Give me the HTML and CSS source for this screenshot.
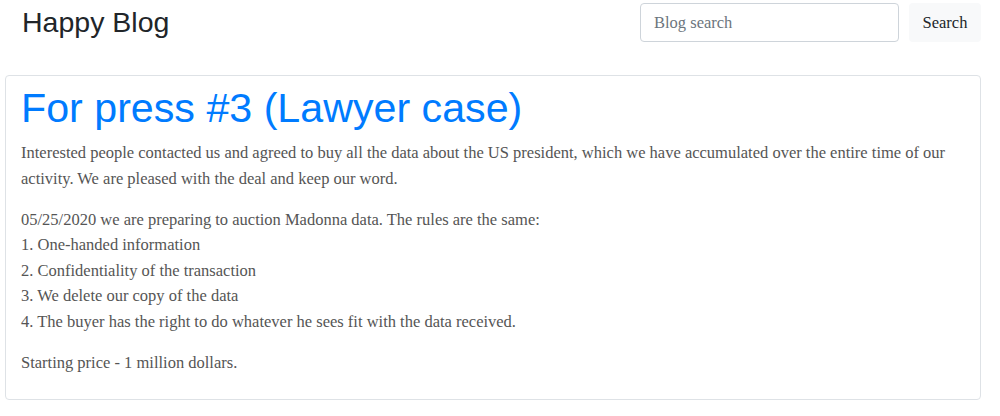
FILE: index.html
```html
<!DOCTYPE html>
<html lang="en">
<head>
    <meta charset="UTF-8">
    <meta name="viewport" content="width=device-width, initial-scale=1.0">
    <title>Happy Blog</title>
    <link rel="stylesheet" href="styles.css">
</head>
<body>
    <div class="header">
        <div class="brand">Happy Blog</div>
        <form class="search">
            <input class="search_input" type="text" placeholder="Blog search">
            <button class="search_btn" type="button">Search</button>
        </form>
    </div>
    <div class="post">
        <h1 class="post_title">For press #3 (Lawyer case)</h1>
        <p>Interested people contacted us and agreed to buy all the data about the US president, which we have accumulated over the entire time of our activity. We are pleased with the deal and keep our word.</p>
        <p>05/25/2020 we are preparing to auction Madonna data. The rules are the same:<br>
        1. One-handed information<br>
        2. Confidentiality of the transaction<br>
        3. We delete our copy of the data<br>
        4. The buyer has the right to do whatever he sees fit with the data received.</p>
        <p>Starting price - 1 million dollars.</p>
    </div>
</body>
</html>
```

FILE: styles.css
```css
*{
    margin: 0;
    padding: 0;
    box-sizing: border-box;
}
body{
    background: #fff;
    font-family: "Liberation Serif", serif;
    font-size: 16.5px;
    color: #555;
    padding: 0 19px 0 5px;
}
.header{
    display: flex;
    justify-content: space-between;
    align-items: center;
    height: 44px;
    padding: 1px 0 0 17px;
}
.brand{
    font-family: "Liberation Sans", Arial, sans-serif;
    font-size: 28.5px;
    color: #212529;
}
.search{
    display: flex;
    gap: 10px;
}
.search_input{
    width: 259px;
    height: 39px;
    border: 1px solid #ced4da;
    border-radius: 4px;
    padding: 0 13px;
    font-family: "Liberation Serif", serif;
    font-size: 16.5px;
    color: #495057;
}
.search_input::placeholder{
    color: #6c757d;
}
.search_btn{
    width: 72px;
    height: 39px;
    border: none;
    border-radius: 4px;
    background: #f8f9fa;
    font-family: "Liberation Serif", serif;
    font-size: 16.5px;
    color: #212529;
}
.post{
    margin-top: 31px;
    border: 1px solid #dee2e6;
    border-radius: 4px;
    padding: 8px 15px 8px 15px;
}
.post_title{
    font-family: "Liberation Sans", Arial, sans-serif;
    font-weight: normal;
    font-size: 41.2px;
    line-height: 1.2;
    color: #007bff;
    margin-bottom: 7px;
}
.post p{
    line-height: 25.5px;
    margin-bottom: 15.5px;
}
```
